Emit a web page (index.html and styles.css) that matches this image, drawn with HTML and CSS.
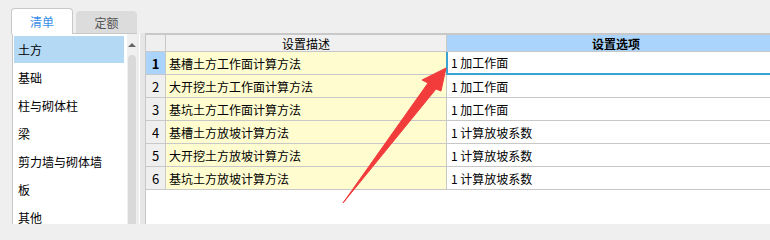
FILE: index.html
```html
<!DOCTYPE html>
<html lang="zh-CN">
<head>
<meta charset="utf-8">
<title>设置</title>
<link rel="stylesheet" href="styles.css">
</head>
<body>
<div class="app">
  <div class="tabs">
    <div class="tab active">清单</div>
    <div class="tab">定额</div>
  </div>
  <div class="main">
    <div class="panel">
      <ul class="list">
        <li class="sel">土方</li>
        <li>基础</li>
        <li>柱与砌体柱</li>
        <li>梁</li>
        <li>剪力墙与砌体墙</li>
        <li>板</li>
        <li>其他</li>
      </ul>
      <div class="scrollbar"><div class="up"></div><div class="thumb"></div></div>
    </div>
    <div class="splitter"></div>
    <div class="grid">
      <div class="row head"><div class="c rh"></div><div class="c c1">设置描述</div><div class="c c2">设置选项</div></div>
      <div class="row cur"><div class="c rh">1</div><div class="c c1">基槽土方工作面计算方法</div><div class="c c2">1 加工作面</div></div>
      <div class="row"><div class="c rh">2</div><div class="c c1">大开挖土方工作面计算方法</div><div class="c c2">1 加工作面</div></div>
      <div class="row"><div class="c rh">3</div><div class="c c1">基坑土方工作面计算方法</div><div class="c c2">1 加工作面</div></div>
      <div class="row"><div class="c rh">4</div><div class="c c1">基槽土方放坡计算方法</div><div class="c c2">1 计算放坡系数</div></div>
      <div class="row"><div class="c rh">5</div><div class="c c1">大开挖土方放坡计算方法</div><div class="c c2">1 计算放坡系数</div></div>
      <div class="row"><div class="c rh">6</div><div class="c c1">基坑土方放坡计算方法</div><div class="c c2">1 计算放坡系数</div></div>
    </div>
  </div>
  <svg class="arrow" width="770" height="224" viewBox="0 0 770 224">
    <polygon points="343,203 428,83 422,80 446,68 441,91 436,89" fill="#f23c3c" stroke="#f23c3c" stroke-width="1" stroke-linejoin="round"/>
  </svg>
</div>
</body>
</html>
```
FILE: styles.css
```css
html, body {
  margin: 0;
  height: 100%;
}
body {
  background: #efefef;
  font-family: "Noto Sans CJK SC", sans-serif;
  font-size: 12px;
  color: #000;
  overflow: hidden;
}
.app {
  position: relative;
  width: 770px;
  height: 224px;
  overflow: hidden;
}
.tabs {
  display: flex;
  align-items: flex-end;
  height: 33px;
  padding-left: 11px;
  gap: 3px;
}
.tab {
  box-sizing: border-box;
  width: 61px;
  height: 22px;
  display: flex;
  align-items: center;
  justify-content: center;
  background: #dcdcdc;
  color: #555;
  border-radius: 4px 4px 0 0;
}
.tab.active {
  width: 62px;
  height: 26px;
  margin-bottom: -1px;
  background: #fff;
  border: 1px solid #c8c8c8;
  border-bottom: none;
  color: #3a8ee6;
  position: relative;
  z-index: 1;
}
.main {
  display: flex;
  height: 191px;
}
.panel {
  margin-left: 12px;
  width: 125px;
  box-sizing: border-box;
  border-left: 1px solid #c8c8c8;
  border-top: 1px solid #c8c8c8;
  background: #fff;
  display: flex;
}
.list {
  flex: 1;
  margin: 0;
  padding: 2px 3px 0 1px;
  list-style: none;
}
.list li {
  height: 27px;
  line-height: 27px;
  margin-bottom: 1px;
  padding-left: 4px;
  white-space: nowrap;
}
.list li.sel {
  background: #b4d9f4;
}
.scrollbar {
  width: 10px;
  background: #f0f0f0;
  display: flex;
  flex-direction: column;
  align-items: center;
}
.up {
  width: 0;
  height: 0;
  margin-top: 9px;
  border-left: 4px solid transparent;
  border-right: 4px solid transparent;
  border-bottom: 4px solid #666;
}
.thumb {
  width: 8px;
  flex: 1;
  margin-top: 8px;
  background: #d9d9d9;
  border-radius: 4px 4px 0 0;
}
.splitter {
  width: 8px;
  background: linear-gradient(to right, #ececec 0 2px, #fff 2px 3px, #e6e6e6 3px);
}
.grid {
  flex: 1;
  background: #fff;
  border-left: 1px solid #c8c8c8;
  border-top: 2px solid #c8c8c8;
  overflow: hidden;
}
.row {
  display: flex;
  height: 23px;
}
.row.head {
  height: 17px;
}
.c {
  box-sizing: border-box;
  flex: none;
  border-right: 1px solid #c8c8c8;
  border-bottom: 1px solid #c8c8c8;
  display: flex;
  align-items: center;
  white-space: nowrap;
}
.rh {
  width: 20px;
  justify-content: center;
  background: #efefef;
  font-size: 13px;
}
.c1 {
  width: 281px;
  padding-left: 3px;
  background: #fffdd0;
}
.c2 {
  width: 339px;
  padding-left: 4px;
}
.head .c1 {
  background: #f0f0f0;
  justify-content: center;
  padding-left: 0;
}
.head .c2 {
  background: #aad4fb;
  justify-content: center;
  padding-left: 0;
  font-weight: bold;
}
.cur .rh {
  background: #aad4fb;
  font-weight: bold;
}
.cur .c1 {
  border-right-color: #3aa3d4;
}
.cur .c2 {
  border-bottom: 2px solid #3aa3d4;
  box-shadow: inset 1px 0 0 #3aa3d4;
}
.arrow {
  position: absolute;
  left: 0;
  top: 0;
  pointer-events: none;
}
```
